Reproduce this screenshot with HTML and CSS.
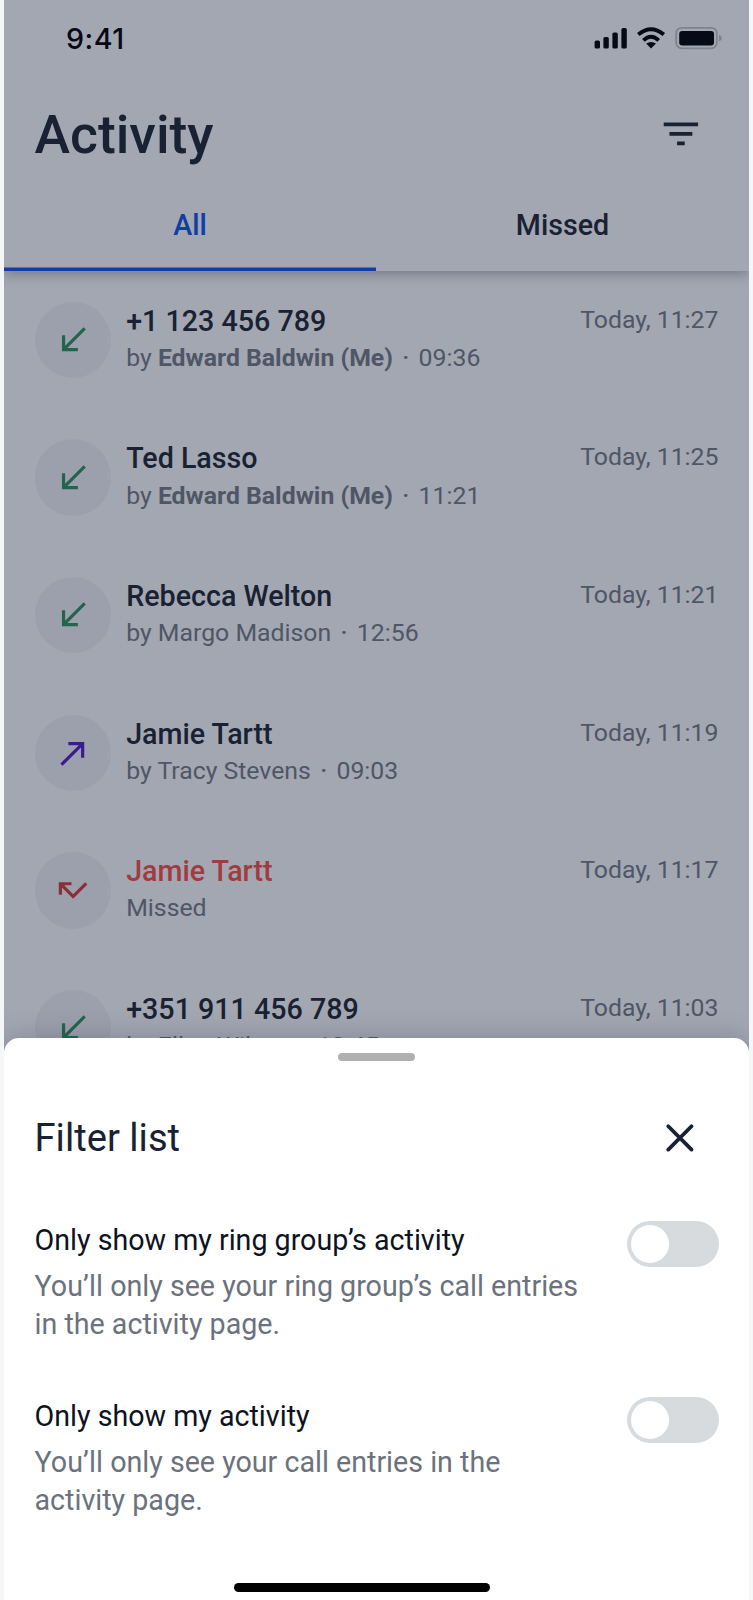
FILE: index.html
```html
<!DOCTYPE html>
<html lang="en">
<head>
  <meta charset="UTF-8" />
  <title>Activity</title>
  <link rel="stylesheet" href="styles.css">
</head>
<body>

  <svg class="defs">
    <symbol id="incoming" viewBox="0 0 24 24"><path d="M20 5.41 18.59 4 7 15.59V9H5v10h10v-2H8.41z"/></symbol>
    <symbol id="outgoing" viewBox="0 0 24 24"><path d="M9 5v2h6.59L4 18.59 5.41 20 17 8.41V15h2V5z"/></symbol>
    <symbol id="missed" viewBox="0 0 24 24"><path d="M19.59 7 12 14.59 6.41 9H11V7H3v8h2v-4.59l7 7 9-9z"/></symbol>
  </svg>

  <div class="phone">
    <header class="header">
      <div class="status">
        <span class="clock">9:41</span>
        <svg class="status-icons" viewBox="594 26 129 24">
          <rect x="594.6" y="40.6" width="5.4" height="8" rx="1.6"/>
          <rect x="603.4" y="37" width="5.4" height="11.6" rx="1.6"/>
          <rect x="612.4" y="32.4" width="5.4" height="16.2" rx="1.6"/>
          <rect x="621.4" y="28" width="5.4" height="20.6" rx="1.6"/>
          <path class="wave" d="M638.3 34.6Q651 24 663.8 34.6M643.4 40.4Q651 33.2 658.7 40.4"/>
          <path d="M646.2 43.6Q651 40.4 656 43.6L651 48.6z"/>
          <rect class="battery" x="676.2" y="27.9" width="40.6" height="20.4" rx="5.4"/>
          <rect x="679.2" y="31" width="34.8" height="14.4" rx="3"/>
          <path class="nub" d="M719 34.8q2.8 1 2.8 3.4t-2.8 3.4z"/>
        </svg>
      </div>
      <div class="title-bar">
        <h1>Activity</h1>
        <button class="icon-button">
          <svg viewBox="0 0 24 24"><path d="M10 18h4v-2h-4v2zM3 6v2h18V6H3zm3 7h12v-2H6v2z"/></svg>
        </button>
      </div>
      <nav class="tabs">
        <a class="tab active">All</a>
        <a class="tab">Missed</a>
      </nav>
    </header>

    <main class="calls">
      <div class="call">
        <div class="avatar incoming"><svg><use href="#incoming"/></svg></div>
        <div class="info">
          <div class="name">+1 123 456 789</div>
          <div class="detail">by <b>Edward Baldwin (Me)</b><i>·</i>09:36</div>
        </div>
        <div class="time">Today, 11:27</div>
      </div>
      <div class="call">
        <div class="avatar incoming"><svg><use href="#incoming"/></svg></div>
        <div class="info">
          <div class="name">Ted Lasso</div>
          <div class="detail">by <b>Edward Baldwin (Me)</b><i>·</i>11:21</div>
        </div>
        <div class="time">Today, 11:25</div>
      </div>
      <div class="call">
        <div class="avatar incoming"><svg><use href="#incoming"/></svg></div>
        <div class="info">
          <div class="name">Rebecca Welton</div>
          <div class="detail">by Margo Madison<i>·</i>12:56</div>
        </div>
        <div class="time">Today, 11:21</div>
      </div>
      <div class="call">
        <div class="avatar outgoing"><svg><use href="#outgoing"/></svg></div>
        <div class="info">
          <div class="name">Jamie Tartt</div>
          <div class="detail">by Tracy Stevens<i>·</i>09:03</div>
        </div>
        <div class="time">Today, 11:19</div>
      </div>
      <div class="call">
        <div class="avatar missed"><svg><use href="#missed"/></svg></div>
        <div class="info">
          <div class="name missed">Jamie Tartt</div>
          <div class="detail">Missed</div>
        </div>
        <div class="time">Today, 11:17</div>
      </div>
      <div class="call">
        <div class="avatar incoming"><svg><use href="#incoming"/></svg></div>
        <div class="info">
          <div class="name">+351 911 456 789</div>
          <div class="detail">by Ellen Wilson<i>·</i>10:45</div>
        </div>
        <div class="time">Today, 11:03</div>
      </div>
    </main>

    <section class="sheet">
      <div class="handle"></div>
      <div class="sheet-header">
        <h2>Filter list</h2>
        <button class="icon-button">
          <svg viewBox="0 0 24 24"><path class="close" d="M5.9 5.9l12.2 12.2M18.1 5.9L5.9 18.1"/></svg>
        </button>
      </div>
      <div class="option">
        <div class="option-text">
          <h3>Only show my ring group’s activity</h3>
          <p>You’ll only see your ring group’s call entries in the activity page.</p>
        </div>
        <div class="toggle"></div>
      </div>
      <div class="option">
        <div class="option-text">
          <h3>Only show my activity</h3>
          <p>You’ll only see your call entries in the activity page.</p>
        </div>
        <div class="toggle"></div>
      </div>
      <div class="home-bar"></div>
    </section>
  </div>

</body>
</html>
```
FILE: styles.css
```css
* {
  box-sizing: border-box;
}
body {
  margin: 0;
  background-color: #f5f6f7;
  color: #182232;
  font-family: Roboto, sans-serif;
}
h1, h2, h3, p {
  margin: 0;
  font-weight: 400;
}
.defs {
  display: none;
}
.phone {
  position: relative;
  width: 745px;
  height: 1600px;
  margin: 0 4px;
  overflow: hidden;
  background-color: #a3a7b2;
}

/* header */
.header {
  position: relative;
  height: 271px;
  box-shadow: 0 3px 12px rgba(50, 55, 75, 0.4);
  background-color: #a3a7b2;
}
.status {
  display: flex;
  justify-content: space-between;
  height: 90px;
  padding: 26px 26px 0 62px;
}
.clock {
  font-family: Inter, sans-serif;
  font-size: 28.65px;
  font-weight: 500;
  line-height: 26px;
  letter-spacing: 0.5px;
  color: #070916;
}
.status-icons {
  width: 129px;
  height: 24px;
  fill: #070916;
}
.wave {
  fill: none;
  stroke: #070916;
  stroke-width: 3.9;
}
.battery {
  fill: none;
  stroke: #7f838e;
  stroke-width: 1.8;
}
.nub {
  fill: #7f838e;
}
.title-bar {
  display: flex;
  align-items: center;
  justify-content: space-between;
  height: 88px;
  padding: 0 30.2px 0 30.5px;
}
h1 {
  font-size: 53.5px;
  font-weight: 500;
}
.icon-button {
  display: flex;
  align-items: center;
  justify-content: center;
  width: 76.4px;
  height: 76.4px;
  padding: 0;
  border: none;
  background: none;
}
.icon-button svg {
  width: 45.8px;
  height: 45.8px;
  fill: #182232;
}
.tabs {
  display: flex;
  height: 93px;
}
.tab {
  flex: 1;
  font-size: 28.65px;
  font-weight: 500;
  line-height: 94px;
  text-align: center;
}
.tab.active {
  flex: 0 0 372px;
  color: #103da6;
  box-shadow: inset 0 -3.5px #103da6;
}

/* call list */
.call {
  display: flex;
  height: 137.6px;
  padding: 30.9px 30.5px 0;
  line-height: 38.2px;
}
.avatar {
  display: flex;
  align-items: center;
  justify-content: center;
  width: 76.4px;
  height: 76.4px;
  border-radius: 50%;
  background-color: #9ca0ac;
}
.avatar svg {
  width: 38.2px;
  height: 38.2px;
}
.avatar.incoming {
  fill: #22644c;
}
.avatar.outgoing {
  fill: #3a1c90;
}
.avatar.missed {
  fill: #8a2f36;
}
.info {
  flex: 1;
  margin-left: 15.3px;
}
.name {
  font-size: 28.65px;
  font-weight: 500;
}
.name.missed {
  color: #a03b3f;
}
.detail, .time {
  font-size: 24.8px;
  line-height: 36.8px;
  color: #4f5666;
}
.detail b {
  font-weight: 700;
}
.detail i {
  margin: 0 9.3px;
  font-style: normal;
  font-weight: 500;
}

/* filter sheet */
.sheet {
  position: absolute;
  left: 0;
  right: 0;
  bottom: 0;
  display: flex;
  flex-direction: column;
  height: 562px;
  padding: 15px 30.5px 8px;
  border-radius: 15px 15px 0 0;
  background-color: #fff;
  box-shadow: 0 0 28px rgba(50, 55, 75, 0.3);
}
.handle {
  align-self: center;
  width: 77px;
  height: 8px;
  border-radius: 4px;
  background-color: #b0b0b0;
}
.sheet-header {
  display: flex;
  align-items: center;
  justify-content: space-between;
  margin: 38.4px 0 45.4px;
}
h2 {
  font-size: 38.2px;
}
.option {
  display: flex;
  justify-content: space-between;
  margin-bottom: 53.6px;
  font-size: 28.65px;
  line-height: 38.2px;
}
.option-text {
  width: 553px;
}
h3 {
  font-size: 28.65px;
  color: #0c1322;
}
.option p {
  margin-top: 7.6px;
  color: #6b727d;
}
.toggle {
  width: 92px;
  height: 46px;
  padding: 4px;
  border-radius: 23px;
  background-color: #d7dbde;
}
.toggle::before {
  content: "";
  display: block;
  width: 38px;
  height: 38px;
  border-radius: 50%;
  background-color: #fff;
}
.close {
  stroke: #182232;
  stroke-width: 2;
  stroke-linecap: round;
}
.home-bar {
  width: 256px;
  height: 9px;
  margin: auto 0 0 199.5px;
  border-radius: 5px;
  background-color: #000;
}
```
